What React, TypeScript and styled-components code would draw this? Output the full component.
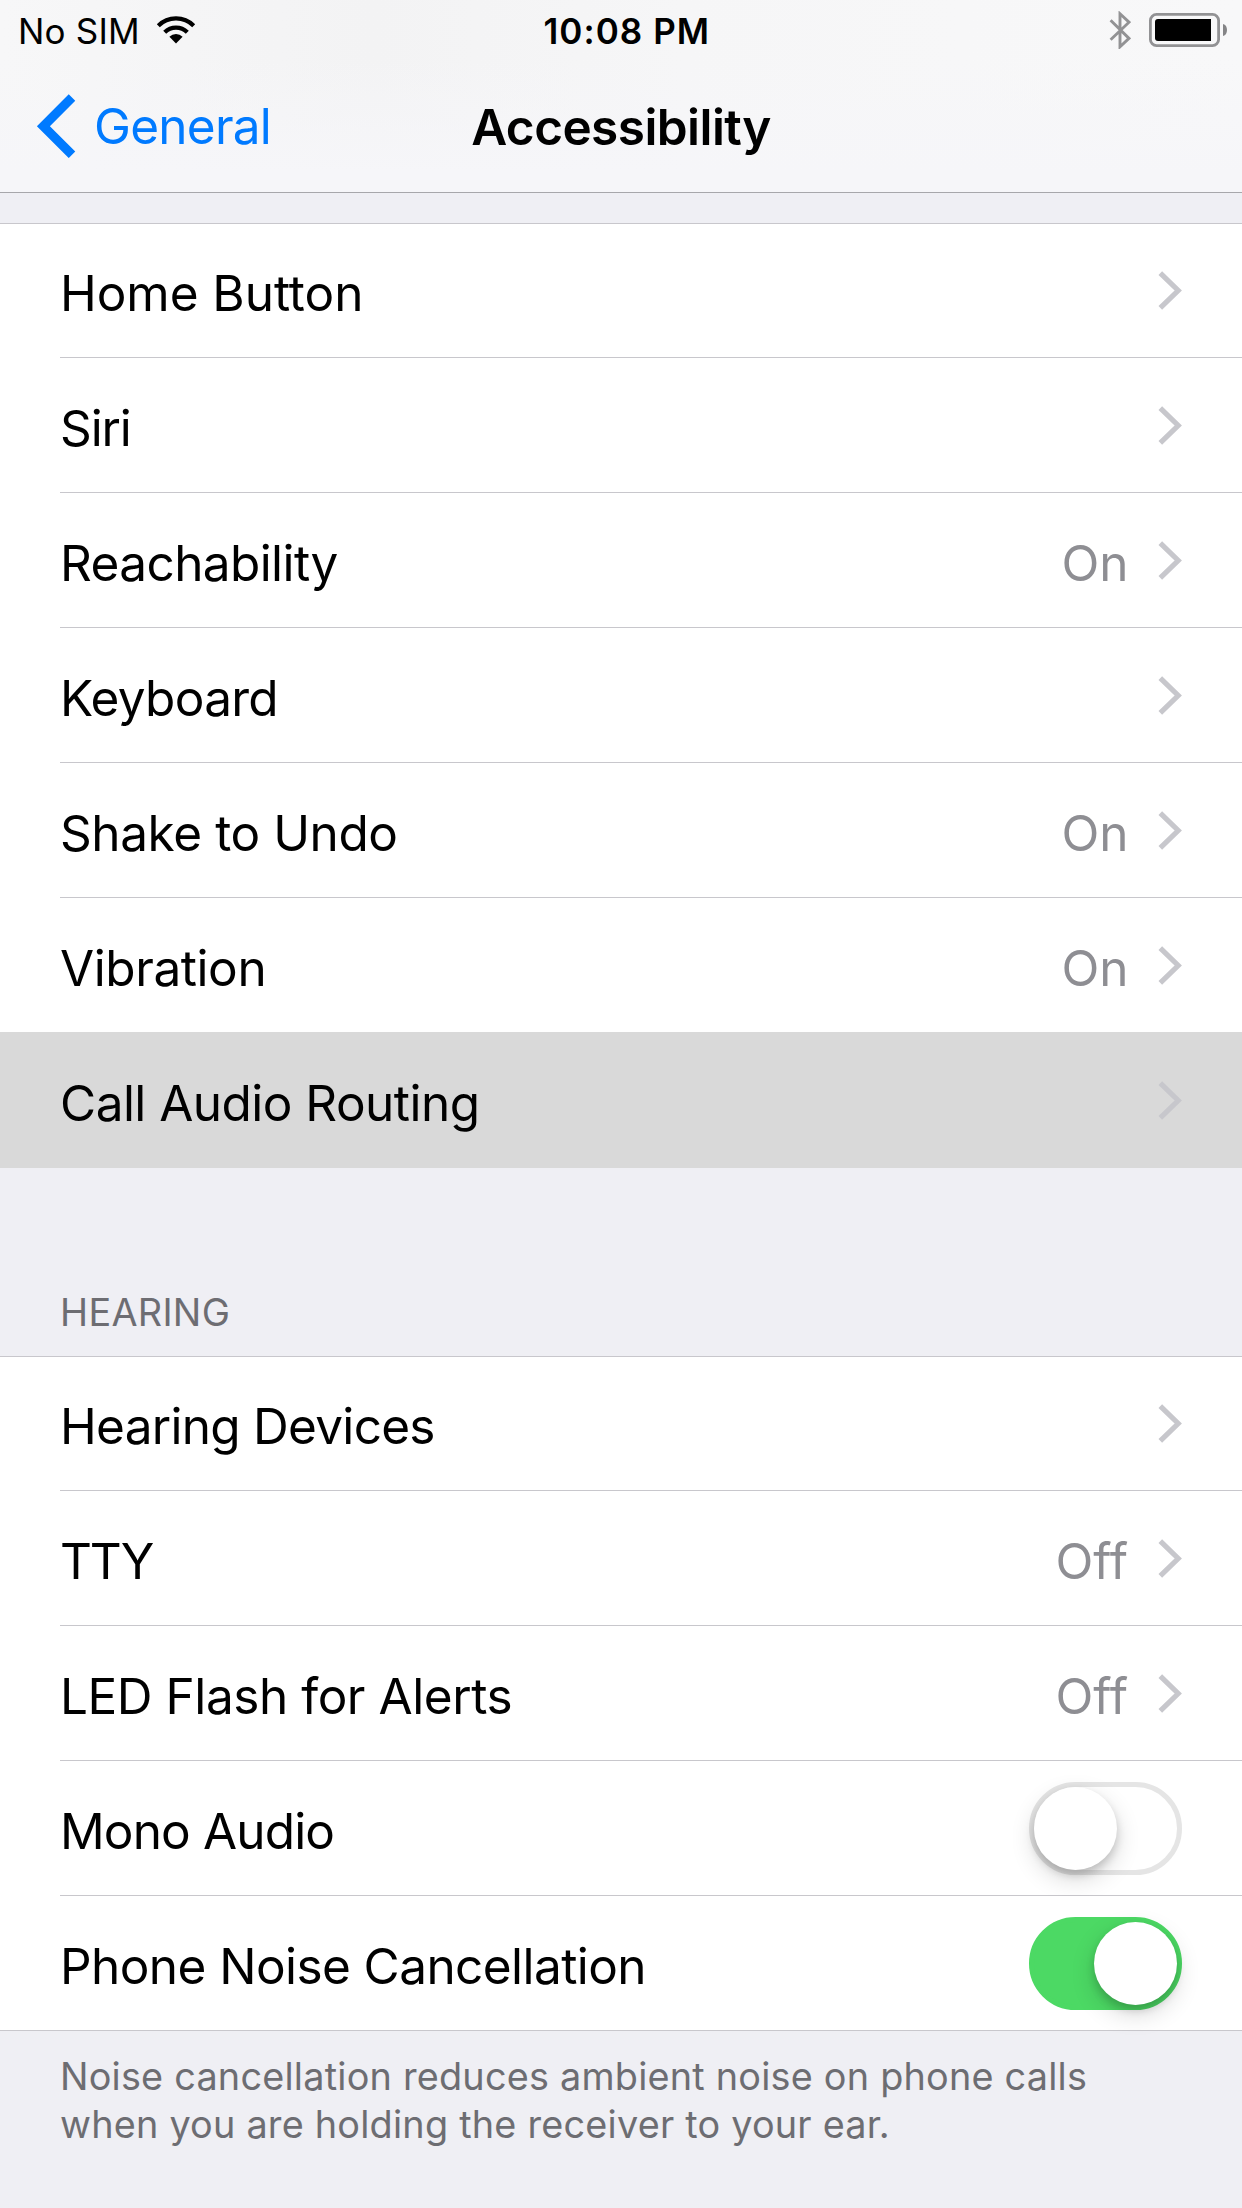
import React from "react";
import styled, { createGlobalStyle } from "styled-components";

const GlobalStyle = createGlobalStyle`
  *, *::before, *::after { box-sizing: border-box; }
  body {
    margin: 0;
    background: #efeff4;
    font-family: Inter, "Liberation Sans", sans-serif;
    color: #000;
  }
  svg { display: block; flex: none; }
`;

const Screen = styled.div`
  width: 1242px;
  height: 2208px;
  display: flex;
  flex-direction: column;
  overflow: hidden;
  background: #efeff4;
`;

const TopBar = styled.header`
  display: flex;
  flex-direction: column;
  height: 193px;
  margin-bottom: 30px;
  border-bottom: 1px solid #a7a7ab;
  background:
    linear-gradient(180deg, rgba(246, 246, 249, 0) 30%, #f6f6f9 90%),
    linear-gradient(90deg, #f7f7f8 0, #f3f3f4 30%, #f6f6f7 55%, #f8f8f9 100%);
`;

const StatusBar = styled.div`
  display: grid;
  grid-template-columns: 543.5px 1fr auto;
  align-items: center;
  height: 60px;
  padding-right: 14px;
`;

const Carrier = styled.div`
  display: flex;
  align-items: center;
  gap: 16px;
  padding-left: 18px;
`;

const StatusText = styled.span<{ $bold?: boolean; $tracking: number }>`
  padding-top: 2px;
  font-size: 35px;
  line-height: 44px;
  font-weight: ${(p) => (p.$bold ? 600 : 400)};
  letter-spacing: ${(p) => p.$tracking}px;
  white-space: nowrap;
`;

const Indicators = styled.div`
  display: flex;
  align-items: center;
  gap: 18px;
`;

const NavBar = styled.nav`
  display: grid;
  grid-template-columns: 1fr auto 1fr;
  align-items: center;
  height: 132px;
`;

const BackButton = styled.a`
  display: flex;
  align-items: center;
  gap: 18px;
  padding-left: 36px;
  color: #007aff;
  font-size: 49.5px;
  line-height: 60px;
  letter-spacing: -0.75px;
`;

const Title = styled.h1`
  margin: 0;
  padding-top: 2px;
  font-size: 49.5px;
  line-height: 60px;
  font-weight: 600;
  letter-spacing: -0.56px;
`;

const Group = styled.section`
  display: flex;
  flex-direction: column;
  border-top: 1px solid #c8c7cc;
`;

const Row = styled.div<{ $selected?: boolean }>`
  height: ${(p) => (p.$selected ? 136 : 135)}px;
  margin-top: ${(p) => (p.$selected ? -1 : 0)}px;
  padding-left: 60px;
  background: ${(p) => (p.$selected ? "#d9d9d9" : "#fff")};
  &:first-child { height: 134px; }
  &:last-child { border-bottom: ${(p) => (p.$selected ? "none" : "1px solid #c8c7cc")}; }
`;

const RowBody = styled.div`
  display: flex;
  align-items: center;
  height: 100%;
  padding-right: 60px;
  border-bottom: 1px solid #c8c7cc;
  ${Row}:last-child & { border-bottom: none; }
`;

const Label = styled.span<{ $tracking: number }>`
  flex: 1;
  padding-top: 5px;
  font-size: 49.5px;
  line-height: 60px;
  letter-spacing: ${(p) => p.$tracking}px;
  white-space: nowrap;
`;

const Value = styled.span<{ $wide: boolean }>`
  padding-top: 5px;
  margin-right: ${(p) => (p.$wide ? 30 : 29.5)}px;
  font-size: 49.5px;
  line-height: 60px;
  color: #8e8e93;
`;

const SwitchTrack = styled.div<{ $on: boolean }>`
  display: flex;
  align-items: center;
  justify-content: ${(p) => (p.$on ? "flex-end" : "flex-start")};
  width: 153px;
  height: 93px;
  border: 5px solid ${(p) => (p.$on ? "#4cd964" : "#e5e5e5")};
  border-radius: 47px;
  background: ${(p) => (p.$on ? "#4cd964" : "#fff")};
`;

const SwitchKnob = styled.div`
  width: 83px;
  height: 83px;
  border-radius: 50%;
  background: #fff;
  box-shadow: 0 9px 24px rgba(0, 0, 0, 0.16), 0 5px 8px rgba(0, 0, 0, 0.16);
`;

const SectionHeader = styled.h2`
  display: flex;
  align-items: flex-end;
  height: 188px;
  margin: 0;
  padding: 0 60px 21px;
  font-size: 37.8px;
  line-height: 46px;
  font-weight: 400;
  letter-spacing: 0.3px;
  color: #6d6d72;
`;

const Footnote = styled.p`
  margin: 0;
  padding: 21px 60px 0;
  font-size: 37.8px;
  line-height: 48px;
  letter-spacing: 0.22px;
  color: #6d6d72;
`;

const WifiIcon = () => (
  <svg width="40" height="28" viewBox="0 0 40 28">
    <g fill="none" stroke="#000" strokeWidth="4.2">
      <path d="M2.3 9.8a25 25 0 0 1 35.4 0" />
      <path d="M8.7 16.2a16 16 0 0 1 22.6 0" />
    </g>
    <path d="M20 27.5l-6.6-6.7a9.4 9.4 0 0 1 13.2 0z" />
  </svg>
);

const BluetoothIcon = () => (
  <svg width="22" height="38" viewBox="0 0 22 38">
    <path
      d="M1.6 9.3L20 27.4l-9 8.4V2.8l9 8.4L1.6 28.7"
      fill="none"
      stroke="#929294"
      strokeWidth="2.9"
    />
  </svg>
);

const BatteryIcon = () => (
  <svg width="79" height="34" viewBox="0 0 79 34">
    <rect x="1.4" y="1.4" width="68.2" height="31.2" rx="6.2" fill="none" stroke="#929294" strokeWidth="2.8" />
    <path d="M9 6h53v22H9a3 3 0 0 1-3-3V9a3 3 0 0 1 3-3z" />
    <path d="M74 11c2.6.6 4 3 4 6s-1.4 5.4-4 6z" fill="#858587" />
  </svg>
);

const BackIcon = () => (
  <svg width="40" height="64" viewBox="0 0 40 64">
    <path d="M36 3.6L7.4 32.2l28.6 28.6" fill="none" stroke="#007aff" strokeWidth="9.2" />
  </svg>
);

const Disclosure = () => (
  <svg width="24" height="39" viewBox="0 0 24 39">
    <path d="M2.3 2.1l17.9 17.4L2.3 36.9" fill="none" stroke="#c7c7cc" strokeWidth="5.2" />
  </svg>
);

type Item = {
  label: string;
  tracking: number;
  value?: string;
  on?: boolean;
  selected?: boolean;
};

const interaction: Item[] = [
  { label: "Home Button", tracking: -0.05 },
  { label: "Siri", tracking: -1.1 },
  { label: "Reachability", tracking: -0.6, value: "On" },
  { label: "Keyboard", tracking: -0.71 },
  { label: "Shake to Undo", tracking: -0.42, value: "On" },
  { label: "Vibration", tracking: -0.42, value: "On" },
  { label: "Call Audio Routing", tracking: -0.53, selected: true },
];

const hearing: Item[] = [
  { label: "Hearing Devices", tracking: -0.72 },
  { label: "TTY", tracking: -2.1, value: "Off" },
  { label: "LED Flash for Alerts", tracking: -0.45, value: "Off" },
  { label: "Mono Audio", tracking: -0.85, on: false },
  { label: "Phone Noise Cancellation", tracking: -0.57, on: true },
];

const SettingsGroup = ({ items }: { items: Item[] }) => (
  <Group>
    {items.map((item) => (
      <Row key={item.label} $selected={item.selected}>
        <RowBody>
          <Label $tracking={item.tracking}>{item.label}</Label>
          {item.value && <Value $wide={item.value === "Off"}>{item.value}</Value>}
          {item.on === undefined ? (
            <Disclosure />
          ) : (
            <SwitchTrack $on={item.on} role="switch" aria-checked={item.on}>
              <SwitchKnob />
            </SwitchTrack>
          )}
        </RowBody>
      </Row>
    ))}
  </Group>
);

export default function App() {
  return (
    <>
      <GlobalStyle />
      <Screen>
        <TopBar>
          <StatusBar>
            <Carrier>
              <StatusText $tracking={0.2}>No SIM</StatusText>
              <WifiIcon />
            </Carrier>
            <StatusText $bold $tracking={1.05}>10:08 PM</StatusText>
            <Indicators>
              <BluetoothIcon />
              <BatteryIcon />
            </Indicators>
          </StatusBar>
          <NavBar>
            <BackButton>
              <BackIcon />
              General
            </BackButton>
            <Title>Accessibility</Title>
          </NavBar>
        </TopBar>
        <SettingsGroup items={interaction} />
        <SectionHeader>HEARING</SectionHeader>
        <SettingsGroup items={hearing} />
        <Footnote>
          Noise cancellation reduces ambient noise on phone calls
          <br />
          when you are holding the receiver to your ear.
        </Footnote>
      </Screen>
    </>
  );
}
